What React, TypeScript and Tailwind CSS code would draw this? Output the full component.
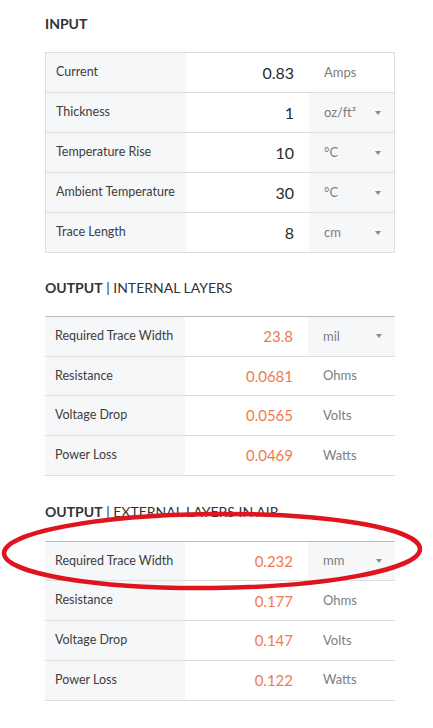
import React from "react"

type Row = {
  label: string
  value: string
  unit: string
  select?: boolean
}

const inputRows: Row[] = [
  { label: "Current", value: "0.83", unit: "Amps" },
  { label: "Thickness", value: "1", unit: "oz/ft²", select: true },
  { label: "Temperature Rise", value: "10", unit: "°C", select: true },
  { label: "Ambient Temperature", value: "30", unit: "°C", select: true },
  { label: "Trace Length", value: "8", unit: "cm", select: true },
]

const internalRows: Row[] = [
  { label: "Required Trace Width", value: "23.8", unit: "mil", select: true },
  { label: "Resistance", value: "0.0681", unit: "Ohms" },
  { label: "Voltage Drop", value: "0.0565", unit: "Volts" },
  { label: "Power Loss", value: "0.0469", unit: "Watts" },
]

const externalRows: Row[] = [
  { label: "Required Trace Width", value: "0.232", unit: "mm", select: true },
  { label: "Resistance", value: "0.177", unit: "Ohms" },
  { label: "Voltage Drop", value: "0.147", unit: "Volts" },
  { label: "Power Loss", value: "0.122", unit: "Watts" },
]

function Caret() {
  return (
    <svg width="6" height="4" viewBox="0 0 6 4" className="absolute right-[13px] top-1/2 -translate-y-1/2">
      <path d="M0 0 L6 0 L3 4 Z" fill="#8a8a8a" />
    </svg>
  )
}

function TableRow({ row, output }: { row: Row; output?: boolean }) {
  return (
    <div className={output ? "flex h-[39.7px] border-b border-[#dcdddf]" : "flex h-[40px] border-b border-[#dcdddf]"}>
      <div className="flex w-[140px] items-center bg-[#f6f7f8] pl-[10px] text-[12.5px] text-[#3d3d3d]">
        {row.label}
      </div>
      <div
        className={
          output
            ? "flex w-[123px] items-center justify-end pr-[15px] text-[15px] text-[#f07a52]"
            : "flex w-[123px] items-center justify-end pr-[15px] text-[16px] text-[#2b2b2b]"
        }
      >
        {row.value}
      </div>
      <div
        className={
          row.select
            ? "relative flex flex-1 items-center bg-[#f6f7f8] pl-[15px] text-[13px] text-[#7d7d7d]"
            : "relative flex flex-1 items-center pl-[15px] text-[13px] text-[#7d7d7d]"
        }
      >
        {row.unit}
        {row.select && <Caret />}
      </div>
    </div>
  )
}

function Heading({ bold, rest }: { bold: string; rest?: string }) {
  return (
    <h2 className="h-[20px] text-[14px] leading-[20px] text-[#333]">
      <span className="font-bold">{bold}</span>
      {rest && <span> | {rest}</span>}
    </h2>
  )
}

export default function App() {
  return (
    <div
      className="relative min-h-[728px] w-[433px] bg-white"
      style={{ fontFamily: "Lato, 'Open Sans', sans-serif" }}
    >
      <div className="w-[395px] pl-[45px] pt-[14px]">
        <Heading bold="INPUT" />
        <div className="mt-[18px] border border-b-0 border-[#dcdddf]">
          {inputRows.map((r) => (
            <TableRow key={r.label} row={r} />
          ))}
        </div>

        <div className="mt-[25px]">
          <Heading bold="OUTPUT" rest="INTERNAL LAYERS" />
        </div>
        <div className="mt-[18px] border-t border-[#b9bbbe]">
          {internalRows.map((r) => (
            <TableRow key={r.label} row={r} output />
          ))}
        </div>

        <div className="mt-[26px]">
          <Heading bold="OUTPUT" rest="EXTERNAL LAYERS IN AIR" />
        </div>
        <div className="mt-[19px] border-t border-[#b9bbbe]">
          {externalRows.map((r) => (
            <TableRow key={r.label + "x"} row={r} output />
          ))}
        </div>
      </div>

      {/* hand-drawn red annotation */}
      <svg
        className="pointer-events-none absolute left-0 top-[505px]"
        width="433"
        height="95"
        viewBox="0 0 433 95"
      >
        <ellipse
          cx="212"
          cy="46"
          rx="208"
          ry="37"
          fill="none"
          stroke="#e0141e"
          strokeWidth="4.5"
          transform="rotate(-0.6 212 46)"
        />
      </svg>
    </div>
  )
}
